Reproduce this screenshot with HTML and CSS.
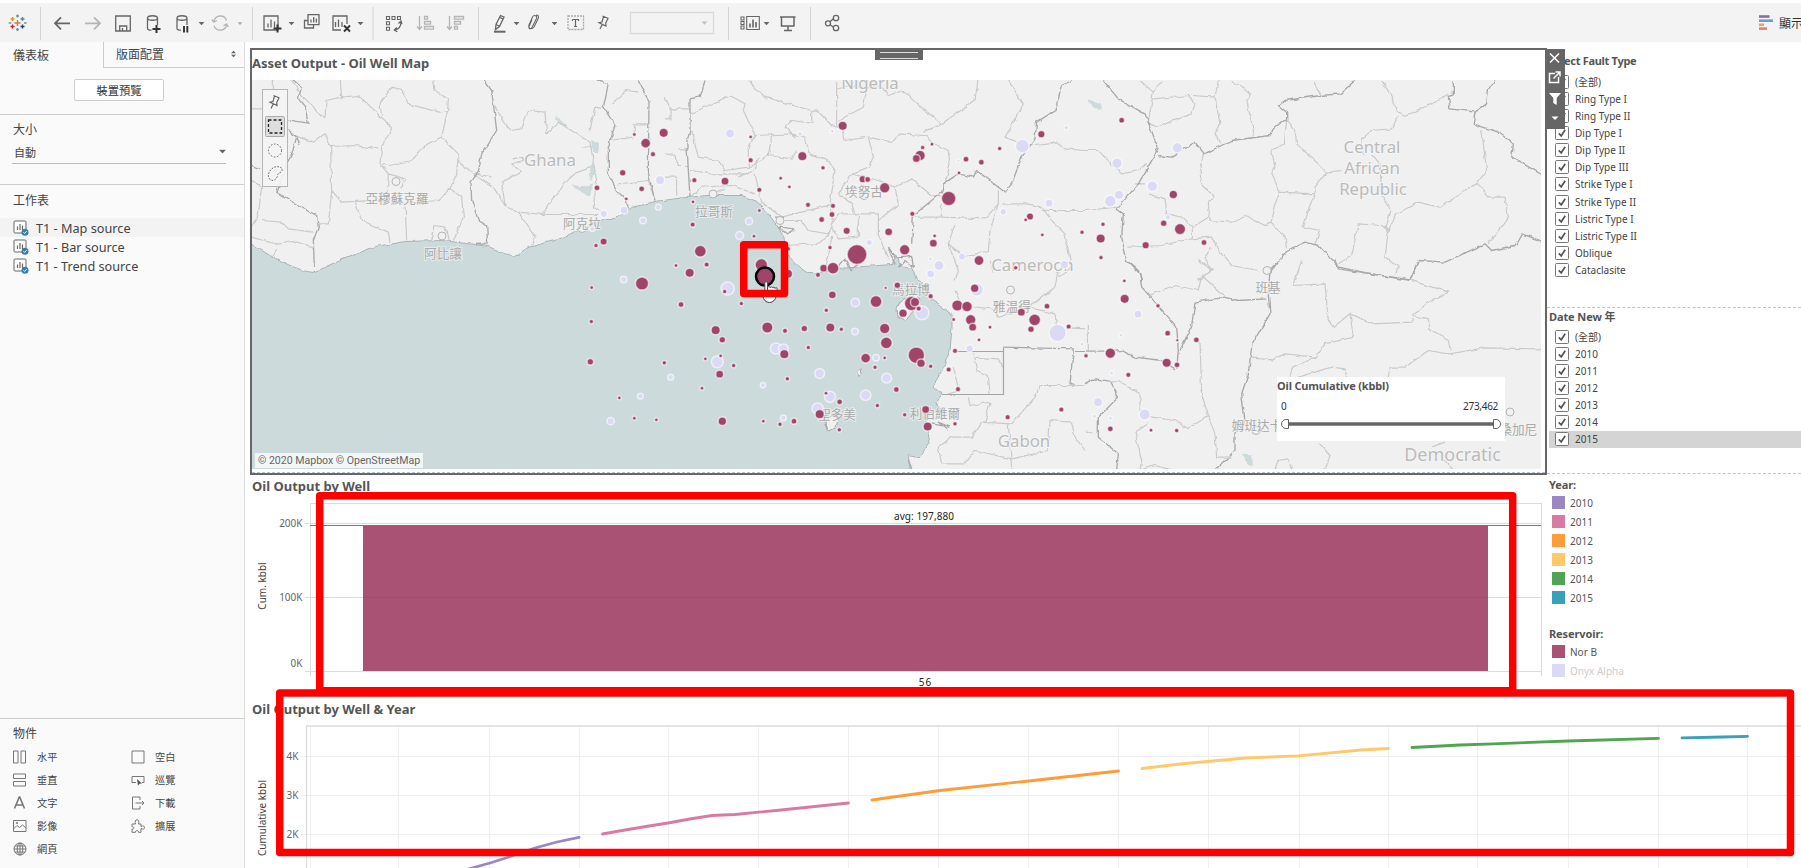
FILE: index.html
```html
<!DOCTYPE html>
<html lang="zh-Hant">
<head>
<meta charset="utf-8">
<title>Asset Output</title>
<link rel="stylesheet" href="styles.css">
</head>
<body>
<svg width="0" height="0" class="defs">
  <defs>
    <symbol id="sheet" viewBox="0 0 16 16"><rect x="1" y="1" width="12" height="12" rx="1" fill="#fff" stroke="#666"/><path d="M4.5 10V6.5M7 10V4M9.500 10V5.500" stroke="#666" stroke-width="1.200"/><circle cx="12" cy="12.300" r="3.500" fill="#3a7fa5"/><path d="M10.500 12.300l1.100 1.100 2-2.200" stroke="#fff" fill="none"/></symbol>
    <symbol id="check" viewBox="0 0 14 14"><rect x=".5" y=".5" width="13" height="13" rx="1" fill="#fff" stroke="#777"/><path d="M3.800 7.300l2.400 2.500 4-6" fill="none" stroke="#555" stroke-width="1.700"/></symbol>
    <symbol id="caret" viewBox="0 0 6 4"><path d="M0 .5h6L3 3.700z"/></symbol>
    <symbol id="pin" viewBox="0 0 14 16"><path d="M5.500 1.500l6 2.500M6.500 2L5 7.500 2 8.200l7 3.300-.3-2.900L11 3.900M5.200 10L3 14.500" fill="none" stroke="#666" stroke-width="1.200"/></symbol>
    <filter id="ragged" x="0" y="0" width="100%" height="100%"><feTurbulence type="fractalNoise" baseFrequency=".13" numOctaves="2" seed="4"/><feDisplacementMap in="SourceGraphic" scale="4" xChannelSelector="R" yChannelSelector="G"/></filter>
  </defs>
</svg>

<header class="toolbar">
  <svg class="tools" viewBox="0 3 900 39" width="900" height="39" fill="none" stroke="#666" stroke-width="1.300">
    <g stroke-width="1.400"><path d="M17.500 20v6M14.500 23h6" stroke="#e8762d"/><path d="M12.500 17v4M10.500 19h4" stroke="#eb912b"/><path d="M22.500 17v4M20.500 19h4" stroke="#5b879b"/><path d="M12.500 24.500v4M10.500 26.500h4" stroke="#c72037"/><path d="M22.500 24.500v4M20.500 26.500h4" stroke="#1f447e"/><path d="M17.500 14.500v3M16 16h3M8.700 23h2.600M24 23h2.600M17.500 28v3M16 29.500h3" stroke="#7099a6"/></g>
    <path d="M40.500 7v33M252.500 7v33M373 7v33M478.500 7v33M728.500 7v33M810.500 7v33" stroke="#d4d4d4" stroke-width="1"/>
    <path d="M70 23.300H55M61 17.300l-6 6 6 6" stroke-width="1.800"/>
    <path d="M85 23.300h15M94 17.300l6 6-6 6" stroke="#b5b5b5" stroke-width="1.800"/>
    <path d="M115.700 16h14.600v15h-14.600zM119.700 31v-5h7v5M122.500 31v-3"/>
    <path d="M147.500 18v10.500c0 1 1.500 1.700 4 1.700M157.500 18v7M147.500 18c0-3 10-3 10 0s-10 3-10 0"/>
    <path d="M156.500 25v8M152.500 29h8" stroke="#333" stroke-width="2"/>
    <path d="M177 18v10.500c0 1 1.500 1.700 4 1.700M187 18v7M177 18c0-3 10-3 10 0s-10 3-10 0"/>
    <path d="M184 26v6.500M187.300 26v6.500" stroke="#333" stroke-width="1.900"/>
    <path d="M214 21a6.500 6.500 0 0 1 12.500-.5M226.500 25a6.500 6.500 0 0 1-12.500.8M211.800 19.500l2 2.700 3-1.700M223.500 25.800l3.200-1.800 1.500 3" stroke="#b5b5b5"/>
    <path d="M264 16h14v14h-14zM268 27.500v-4M271 27.500v-8M274.500 27.500v-6"/>
    <path d="M277.500 24.500v8M273.500 28.500h8" stroke="#333" stroke-width="2"/>
    <path d="M308 14.700h11v10h-11zM311 22.500v-3M313.700 22.500V17M316.300 22.500v-4M308 20.500h-3.500v7.500h9v-3" />
    <path d="M347 16.500V16h-14v14h8M335.500 27v-5M338.500 27v-7.500M342 27v-5M347 16v8"/>
    <path d="M344 25.500l6 6M350 25.500l-6 6" stroke="#333" stroke-width="1.900"/>
    <g stroke-width="1.100"><path d="M386.500 16.500h3v3h-3zM392 16.500h3v3h-3zM397.500 16.500h3v3h-3zM386.500 21.800h3v3h-3zM386.500 27.300h3v3h-3z"/></g>
    <path d="M401 22c0 5-3 7.500-6.500 8M398.500 23.500l2.500-2.500 1 3M396.700 27.500l-2.400 2.500 3 1.800"/>
    <g stroke="#b5b5b5"><path d="M419.500 16v13M417 26.500l2.500 3 2.500-3M424.500 16.500h3v2.600h-3zM424.500 21.500h6v2.600h-6zM424.500 26.500h9v2.600h-9zM449.500 16v13M447 26.500l2.500 3 2.500-3M454.500 16.500h9v2.600h-9zM454.500 21.500h6v2.600h-6zM454.500 26.500h3v2.600h-3z"/></g>
    <path d="M500.500 15.500l3.500 1.500-4.500 9.500-4 3 .5-5zM500 17.500l2.800 1.300M496 24.500l3 1.500"/><path d="M494 31.700h11.500" stroke="#666" stroke-width="2"/>
    <path d="M532 19.500l-3 7c-.7 2.500 2 3 3 1l4.500-9c1.300-3-2.500-4-4-1.500l-3.500 8c-1 3 2 5.500 5 2l4-8c1.500-3.500-.5-4-2-4" stroke-width="1.100"/>
    <path d="M568 16h15.500v13.500H568z" stroke="#aaa" stroke-dasharray="2 1"/><path d="M572.500 19.500h6v1.500M572.500 21v-1.500M575.500 19.500v7M574 26.500h3" stroke-width="1.200"/>
    <path d="M630.500 12.500h83v21h-83z" stroke="#dadada"/>
    <path d="M741 17h3v3h-3zM741 21.500h3v3h-3zM741 26h3v3h-3zM746.700 16.500h12.600v13h-12.600z" stroke-width="1.100"/><path d="M750 27.500v-4M753 27.500v-8M756 27.500v-5.500" stroke-width="1.600"/>
    <path d="M780 17h15.500M781.500 17v9h12.500v-9M788 26.500v4M784 30.500h8" stroke-width="1.500"/>
    <path d="M828 23.300l5.500-4.500M828 23.300l5.500 4" /><circle cx="828" cy="23.300" r="2.500" fill="#f3f3f3"/><circle cx="836" cy="18" r="2.700"/><circle cx="836" cy="28" r="2.700"/>
    <g fill="#666" stroke="none"><use href="#caret" x="198.500" y="21.500" width="6" height="4"/><use href="#caret" x="237.500" y="21.500" width="5" height="4" opacity=".5"/><use href="#caret" x="288.500" y="21.500" width="6" height="4"/><use href="#caret" x="357.500" y="21.500" width="6" height="4"/><use href="#caret" x="513.500" y="21.500" width="6" height="4"/><use href="#caret" x="551.500" y="21.500" width="6" height="4"/><use href="#caret" x="701.500" y="21" width="6" height="4" opacity=".35"/><use href="#caret" x="763.500" y="21.500" width="6" height="4"/></g>
    <use href="#pin" x="597" y="14.500" width="14" height="16"/>
  </svg>
  <div class="showme"><svg width="14" height="16"><path d="M0 1.500h10.500" stroke="#8a6f9b" stroke-width="2.600"/><path d="M0 5.700h14" stroke="#6f9bd1" stroke-width="2.600"/><path d="M0 9.800h5" stroke="#f0a060" stroke-width="2.600"/><path d="M0 13.600h8" stroke="#ef7b74" stroke-width="2.600"/></svg><span>顯示</span></div>
</header>

<div class="workspace">
  <aside class="side">
    <div class="tabs"><div class="tab on">儀表板</div><div class="tab">版面配置<svg width="5" height="8" viewBox="0 0 6 8"><path d="M0 3h6L3 0zM0 5h6L3 8z" fill="#666"/></svg></div></div>
    <div class="preview"><button>裝置預覽</button></div>
    <section class="size"><h3>大小</h3><div class="select">自動<svg width="7" height="5" viewBox="0 0 6 4"><use href="#caret" width="6" height="4" fill="#666"/></svg></div></section>
    <section class="sheets"><h3>工作表</h3>
      <div class="sheet hot"><svg width="16" height="16"><use href="#sheet"/></svg>T1 - Map source</div>
      <div class="sheet"><svg width="16" height="16"><use href="#sheet"/></svg>T1 - Bar source</div>
      <div class="sheet"><svg width="16" height="16"><use href="#sheet"/></svg>T1 - Trend source</div>
    </section>
    <section class="objects"><h3>物件</h3>
      <div class="objgrid">
        <div><svg viewBox="0 0 14 14"><path d="M.5 1h4.500v12H.5zM8 1h4.500v12H8z"/></svg>水平</div>
        <div><svg viewBox="0 0 14 14"><path d="M1 1h12v12H1z"/></svg>空白</div>
        <div><svg viewBox="0 0 14 14"><path d="M.5 1h12v4.500H.5zM.5 8.500h12V13H.5z"/></svg>垂直</div>
        <div><svg viewBox="0 0 14 14"><path d="M5 9.500H1v-6h12v6h-2"/><path d="M6 6l5 4.500-2.500.3-1.500 2z" fill="#555" stroke="none"/></svg>巡覽</div>
        <div><svg viewBox="0 0 14 14"><path d="M1.500 12.500L6.300 1h.4l4.800 11.500M3.300 9h6.500" stroke-width="1.600"/></svg>文字</div>
        <div><svg viewBox="0 0 14 14"><path d="M9 4V1H1.500v12H9v-3M4.500 7H13M11 5l2 2-2 2"/></svg>下載</div>
        <div><svg viewBox="0 0 14 14"><path d="M.5 1.500h12.500v11H.5zM.5 10L4 6.500l2.500 2 3-2.500 3.500 3"/><circle cx="4" cy="4" r=".7"/></svg>影像</div>
        <div><svg viewBox="0 0 14 14"><path d="M1 5h3.500C3.500 2.500 4.500.7 6 .7S8.500 2.500 7.500 5H10v2.500c2-1 3.700-.5 3.700 1s-1.700 2-3.700 1v3.800H7.500c.3-2.500-3.300-2.500-3 0H1V10c2.500.5 2.500-2.500 0-2.300z"/></svg>擴展</div>
        <div><svg viewBox="0 0 14 14"><circle cx="7" cy="7" r="6"/><ellipse cx="7" cy="7" rx="2.800" ry="6"/><path d="M1 7h12M2 4h10M2 10h10M7 1v12"/></svg>網頁</div>
      </div>
    </section>
  </aside>

  <main class="dash">
    <div class="views">
      <section class="mapzone">
        <h2>Asset Output - Oil Well Map</h2>
        <svg class="map" viewBox="252 79.500 1289 389.500" width="1289" height="389.500">
          <rect x="252" y="79" width="1290" height="391" fill="#f0f0f0"/>
          <g filter="url(#ragged)">
            <rect x="240" y="70" width="1310" height="410" fill="none"/>
            <path class="sea" d="M245 240L252 244 270 255 290 265 303 270 312 272 325 267 345 258 375 246 395 243 405 241 442 240 475 244 488 246 503 252 513 257 528 247 558 239 578 230 593 222 607 218 615 218 632 207 655 201 685 197 708 195 742 195 757 201 768 213 777 225 784 237 785 247 790 257 798 265 808 273 818 273 838 268 865 266 892 264 895 257 888 248 898 257 900 266 912 268 917 280 928 287 932 300 943 307 952 313 952 327 950 350 942 370 932 387 942 392 937 402 940 410 925 413 927 427 930 443 920 457 907 455 912 475 245 475z"/>
            <path class="land" d="M897 309l3-7 8-4 7-6 5 8-8 12-6 8-8-4zM826 420l6-5 6 4-2 8-9 4zM858 371l3-3 1 5-3 3z"/>
            <path class="lake" d="M557 114l3 5 6 6-4-1-6-5zM591 139l8 5-1 8-5-1v-3l-13-1 12-2zM571 184l10 2 12-3-3 12-8-3zM593 160l2 12-4 8-2-6zM1088 99l13 4 1 6-5-1-9-6zM1242 453l10 1 1 12-8-6zM715 191l9-4 3 1-8 4z"/>
            <g transform="translate(245 40) scale(.33333)">
              <path class="rg" d="M20 205H52M85 150V120L105 105M140 120L170 165 240 235 243 180 290 170 285 110M290 170L340 165 375 200 420 240 440 265 410 320 405 370 430 400 425 490M410 225L405 190 440 140 470 150 490 190 580 215 608 210 610 175 570 150 565 110M608 210L590 290 640 340 635 400 615 445 580 480 490 488M590 290L545 310 500 360 430 375 412 370M400 325L330 315 257 318 240 280 205 305 150 285M257 318L260 450 250 550H222M260 450L290 485 425 478 480 490 485 600M330 485L350 540 430 575 435 605M560 600L570 555 600 560 610 598M430 400L480 415 470 440M615 445L650 470 655 530 625 600M20 420L50 440 40 520 20 560M50 540L110 545 130 565 205 575M20 590L90 610 140 600 205 620M80 655L95 625M640 360L690 405 745 440 780 495 820 515 895 522 910 490 985 400 1040 380M690 400L740 410M800 355L830 350 835 360 800 370 830 395 770 425 780 495M820 515L870 590 860 615M750 200L795 270 830 265 850 210 900 215 905 280 940 245 1035 305 1055 420 1045 500 1080 520M1035 270L1050 200 1080 205M895 522H1060M1100 190L1145 150 1180 155M1168 280V250H1210M1095 300L1165 290M1120 430L1210 420 1230 480"/>
              <path class="bd" d="M135 110L170 140 160 175 180 200 190 248 130 238M130 268L155 290 140 340 115 400 95 455 135 480 215 525 220 560 205 600 208 680M155 290L165 310M20 375L45 385M715 115L740 150 755 270 735 300 710 340 700 395 678 425 680 480 700 540 725 555 728 610 690 612M1055 120L1090 130 1075 200 1110 255 1090 320 1090 400 1115 450 1145 480 1150 505M1180 120L1190 145 1212 180 1210 400 1230 480"/>
            </g>
            <g transform="translate(665 70) scale(.33333)">
              <path class="rg" d="M0 80L15 110V145H0M15 115H75M0 250L30 255 40 285H70M40 235H72M0 320H35V375M78 130L130 105 195 75 240 100 235 120 270 195 380 190 420 200 435 250 495 275 510 300 495 400 505 440 490 500M250 30L300 80 440 120 455 118 500 165 515 170 515 30M440 120V158L380 150 360 170 395 205M515 60L560 45 605 55 595 110 520 150M605 55L650 50 670 75 715 60 750 95 830 160 930 90 940 20M535 180L540 210 610 200 680 215 700 190 780 195 800 215M830 160L775 185M610 200L625 260 610 290 560 310 535 345 520 370M800 215L850 240 855 280 840 340M1030 30L1075 100 1020 200 1085 225 1170 215 1200 235 1260 240M80 180L100 260 160 270 180 300 250 290 250 230 270 195M250 290L310 255 320 195M75 300L140 310 250 310M310 255L380 265 395 240M220 320L270 300 280 260M270 310L290 395 350 440 410 425 470 410 500 400M75 380L110 350 200 345 270 370M360 450L410 450 430 480 490 490 500 460 520 430 580 430 580 500 520 505 500 470M360 525L450 520 490 500M500 500L480 590M580 430L640 430 640 490 670 570M640 450L700 400 690 350 740 325 800 375 830 380M520 370L560 400 570 430M560 310L640 330 690 350M745 440L830 440 960 445 1000 400 1000 360M830 440V400M870 460L850 520 900 560 970 540 975 480 1000 400M1010 400L1090 400 1130 410 1160 450 1200 490 1220 590 1180 620M1130 420H1260M850 520L880 600 870 630"/>
              <path class="bd" d="M120 30L105 80 75 85 75 180 65 215 75 380M740 520L745 435 830 365 835 340 880 310 925 320 935 300 1020 365 1040 340 1070 260 1110 205 1115 155 1170 120 1190 45 1220 30M330 440L355 440 345 470 390 475 365 490 340 470M520 590L540 565 555 600 580 580M670 530L690 560 740 555 745 590 720 570 700 590M670 540L690 580"/>
            </g>
            <g transform="translate(1085 70) scale(.33333)">
              <path class="rg" d="M165 30L205 65 190 155 215 170 320 130 330 100 310 75 205 85M205 65L230 30M400 30L390 80 320 75M390 80L405 160 390 190 405 220M440 30L500 70 485 90 508 195M685 30L705 75M890 30L915 70 940 125 965 135 1060 90 1090 70M940 135L920 175 860 180 830 205 835 255M860 250L885 280 890 370 915 420 900 470 915 480M605 145L630 180 635 220 700 280 725 305 770 300M605 145L598 220 560 240 570 290 560 310 585 365 690 370 690 350 725 305M585 365L570 400 555 455 540 465 480 435 440 455 375 450 370 400 385 375 350 340 345 310 358 250M555 455L600 500 605 540M690 370L670 420 655 470 705 480 690 520M760 580L800 555 820 460 890 465 910 480 900 560 940 590 930 615M910 480L935 430 1000 395 1065 410 1175 340 1205 300 1190 180M1175 340L1215 380 1260 380 1270 440 1210 520M0 240L40 240 110 310 160 300 185 280M150 340H180M190 370L240 385 245 430 290 440 322 470 370 440M322 470V505L380 500 400 540 440 585 520 600M130 530L230 525 320 505 380 500M380 530L360 560 380 600 340 630M0 420L95 410"/>
              <path class="bd" d="M55 30L100 85 180 130 220 235 160 340 95 415 115 430 110 500 125 570 160 600 170 630M220 255L260 260 330 215 358 250 440 210 555 195 565 175 605 145 605 125 580 105 600 90 705 75 765 70 810 30M1105 30V70L1090 75 1095 115 1170 125 1205 100 1210 60 1230 30M1170 125L1165 160 1240 185 1285 220 1280 260 1370 312M555 610L605 540 660 515 700 525 760 590 860 610 975 630 1000 570 1080 575 1200 520 1220 540 1290 525 1310 490 1370 512"/>
            </g>
            <g transform="translate(665 250) scale(.33333)">
              <path class="bd" d="M480 520L488 540M850 430L870 437M800 520L855 530 820 515 850 540M727 615L740 655M1015 290L1225 295 1215 400 1230 405"/>
              <path class="rg" d="M975 30L985 65M1090 170L1170 110 1180 60M870 120L890 165 980 175 1000 200 1060 180 1090 170 1170 190 1175 230 1260 235M925 310L935 360 970 375 975 430M865 350L885 420 850 430M925 320L1000 325 1010 350M1260 405H1125L1110 440 1040 520 950 515 920 560 860 560 820 590 830 640 900 640 930 600 1040 625 1150 600 1155 510 1220 515 1230 560 1260 600M910 440L915 465 975 455 960 515M1030 520L1040 655"/>
            </g>
            <g transform="translate(1085 260) scale(.33333)">
              <path class="bd" d="M125 0L165 40 170 80 250 170 275 200 280 270 275 325M285 270L320 195 330 125 420 110 460 120 545 115M0 272H90L110 270 150 290 230 300 270 325M585 0L555 30 550 100 555 160 500 255 490 340 470 400 480 480 450 520 450 570 390 628M0 370L30 355 75 362 100 410 40 470 40 530 100 580 95 628M750 0L760 25 860 40 975 58 1000 0"/>
              <path class="rg" d="M190 105L270 75 340 90 350 45 400 90 420 105M350 45L385 30 340 0M650 0L625 75 720 70 730 180 745 200 795 160 860 190 980 185 985 160 1040 120 1090 95 1010 70 975 58M795 160L805 230 720 250 690 290 600 280 560 298 495 292M690 290L620 325 615 350M640 350L740 320 780 325 785 350M910 350L915 320 960 320 1030 270 1090 280 1200 262 1370 265M985 165L1030 175 1035 210 1090 240 1095 270M345 240L350 400 370 465 390 520 395 590 440 590M370 465L310 505 270 480 200 470 165 450 165 400 100 360 70 362M190 490L150 515 170 600 165 628M165 628L210 615 260 628M570 628L580 600 610 595 620 628M700 545L735 585 720 628M1040 560L1080 545M1070 590L1105 628M0 510L30 520M10 270V195"/>
            </g>
          </g>
          <path d="M952.500 351H1003.500V394H942M1003.500 394V347M1075 351h10" fill="none" stroke="#a5a5a5" stroke-width="1.200"/>
          <g class="dots" fill="#f0f0f0" stroke="#b5b5b5"><circle cx="396" cy="181" r="4"/><circle cx="442" cy="235.500" r="4"/><circle cx="582" cy="228" r="4"/><circle cx="713" cy="193.500" r="4"/><circle cx="780" cy="220" r="4"/><circle cx="864" cy="195" r="4"/><circle cx="1010.500" cy="289.500" r="4"/><circle cx="1267" cy="270" r="4"/><circle cx="1510" cy="411.500" r="4"/><circle cx="1256" cy="430" r="4"/></g>
          <g class="country"><text x="550" y="165">Ghana</text><text x="870" y="88">Nigeria</text><text x="1032.500" y="270">Cameroon</text><text x="1372" y="152.500">Central</text><text x="1372" y="173.500">African</text><text x="1373" y="194.500">Republic</text><text x="1024" y="446">Gabon</text><text class="big" x="1452.500" y="460.500">Democratic</text></g>
          <g class="city"><text x="397" y="202">亞穆蘇克羅</text><text x="443" y="257">阿比讓</text><text x="582" y="227">阿克拉</text><text x="714" y="215">拉哥斯</text><text x="864" y="195">埃努古</text><text x="911" y="293">馬拉博</text><text x="1012" y="310">雅温得</text><text x="1268" y="291">班基</text><text x="837" y="418">聖多美</text><text x="935" y="417">利伯維爾</text><text x="1257" y="429">姆班达卡</text><text x="1512" y="433">基桑加尼</text></g>
          <g id="wells"></g>
        </svg>
        <div class="grip"></div>
        <svg class="maptools" width="26" height="98" viewBox="262 89 26 98" fill="none" stroke="#666"><rect x="262.500" y="89.500" width="25" height="97" fill="#f4f4f4" fill-opacity=".9" stroke="#b5b5b5"/><use href="#pin" x="268" y="94" width="14" height="16"/><rect x="265.500" y="116.500" width="19" height="20" rx="1" fill="#dedede" stroke="#aaa"/><rect x="268.500" y="120" width="13" height="13" stroke="#222" stroke-width="1.300" stroke-dasharray="3 2"/><circle cx="275" cy="150.500" r="6.500" stroke-dasharray="1.600 1.600"/><path d="M270 179.500c-4-4 0-11 5-12.500 4-1 8 .5 7 3.500s-4 1.500-4.500 5-4.500 6.500-7.500 4z" stroke-dasharray="1.600 1.400"/></svg>
        <div class="range"><b>Oil Cumulative (kbbl)</b><div class="ends"><span>0</span><span>273,462</span></div><svg width="222" height="12"><path d="M6 6h210" stroke="#666" stroke-width="3.500"/><path d="M8.500 1.500H6a4.500 4.500 0 0 0 0 9h2.500zM213.500 1.500h2.500a4.500 4.500 0 0 1 0 9h-2.500z" fill="#fff" stroke="#666"/></svg></div>
        <div class="credit">© 2020 Mapbox © OpenStreetMap</div>
        <svg class="zonebar" width="20" height="80" fill="none" stroke="#fff"><rect width="20" height="80" fill="#666" stroke="none"/><path d="M5 4.500l9 9M14 4.500l-9 9" stroke-width="1.500"/><path d="M10 24.500H4.500v9h9V28M8.500 29.500l6-6M10.500 23h4.500v4.500" stroke-width="1.500"/><path d="M4 44h12l-4.300 5v7l-3.400-2v-5z" fill="#fff" stroke="none"/><path d="M6.500 67.500h7L10 71z" fill="#fff" stroke="none"/></svg>
      </section>
      <section class="barzone">
        <h2>Oil Output by Well</h2>
        <svg viewBox="250 496 1297 201" width="1297" height="201">
          <path d="M310.500 503.500H1541.500M310.500 523.500H1541.500M305 523.500h5M305 597.500H1541.500M305 671.500H1541.500M310.500 503v173M1541.500 503v173" stroke="#dcdcdc" fill="none"/>
          <rect x="363" y="525.500" width="1125" height="145.500" fill="#aa5273"/><path d="M363 597.500H1488" stroke="#a54b6c"/>
          <path d="M310 525.500H1541" stroke="#777"/>
          <g class="ax" text-anchor="end"><text x="302.500" y="527">200K</text><text x="302.500" y="601">100K</text><text x="302.500" y="667">0K</text></g>
          <text class="ay" transform="rotate(-90 266 586)" x="266" y="586">Cum. kbbl</text>
          <g class="mk"><text x="924" y="519.800" textLength="60">avg: 197,880</text><text x="925" y="685.500" textLength="12.500">56</text></g>
        </svg>
      </section>
      <section class="linezone">
        <h2>Oil Output by Well &amp; Year</h2>
        <svg viewBox="250 719 1551 149" width="1551" height="149">
          <path d="M310.500 726v142M398.500 726v142M489.500 726v142M579.500 726v142M668.500 726v142M758.500 726v142M848.500 726v142M938.500 726v142M1028.500 726v142M1118.500 726v142M1208.500 726v142M1299.500 726v142M1388.500 726v142M1477.500 726v142M1568.500 726v142M1658.500 726v142M1747.500 726v142M301 756.500H1801M301 795.500H1801M301 834.500H1801" stroke="#efefef"/>
          <path d="M306.500 868V726H1801" stroke="#dcdcdc" fill="none" stroke-width="1.300"/>
          <g fill="none" stroke-width="2.800" stroke-linecap="round" stroke-linejoin="round">
            <path d="M465 870L490 863 512 856 535 848 557 842 579 837.300" stroke="#9b87c2"/>
            <path d="M602.500 834L625 830 646 826.500 668 823 690 819 712 815.500 735 814.500 781 810 848.500 803" stroke="#d87ba4"/>
            <path d="M872 800L940 790.500 1029 781 1118.500 771" stroke="#fd9c3a"/>
            <path d="M1142 768.500L1180 764 1246 758 1298 755.800 1361 750 1388.500 748.500" stroke="#ffc96b"/>
            <path d="M1412 747.500L1460 745 1493 743.800 1568 741 1658.500 738.300" stroke="#4fa553"/>
            <path d="M1682 737.800L1723 737 1747.500 736.300" stroke="#3a9fbb"/>
          </g>
          <g class="ax" text-anchor="end"><text x="298.500" y="760">4K</text><text x="298.500" y="799">3K</text><text x="298.500" y="838">2K</text></g>
          <text class="ay" transform="rotate(-90 266 818)" x="266" y="818">Cumulative kbbl</text>
        </svg>
      </section>
    </div>

    <div class="filters">
      <section class="fault"><h4 class="ft">Select Fault Type</h4><ul id="fault"></ul></section>
      <section class="date"><h4>Date New 年</h4><ul id="date"></ul></section>
      <section class="legend"><h4>Year:</h4>
        <div><i class="y10"></i>2010</div><div><i class="y11"></i>2011</div><div><i class="y12"></i>2012</div><div><i class="y13"></i>2013</div><div><i class="y14"></i>2014</div><div><i class="y15"></i>2015</div>
        <h4 class="res">Reservoir:</h4>
        <div><i class="nor"></i>Nor B</div><div class="dim"><i class="onyx"></i>Onyx Alpha</div>
      </section>
    </div>
  </main>
</div>

<svg class="notes" width="1801" height="868" fill="none">
  <path d="M767.500 290.500v-7.500c0-1.800-2.700-1.800-2.700 0v9l-1.500-1.500 3 5h9.500l1.200-3.500v-3.500c0-1.200-1.800-1.200-2 0 0-1.600-2.200-1.600-2.400-.4 0-1.600-2.200-1.600-2.400-.4 0-1.400-2.500-1.400-2.700-.2z" fill="#fff" stroke="#444" stroke-width=".9"/>
  <path d="M763 296a6.500 6.500 0 0 0 13 0z" fill="#fff" stroke="#444"/>
  <g stroke="#f00" stroke-width="7.500" stroke-linejoin="round"><rect x="743.700" y="244.700" width="40.800" height="48.800"/><rect x="319.700" y="495.700" width="1193" height="195"/><rect x="279.700" y="693" width="1510.800" height="159.500"/></g>
</svg>
<script src="app.js"></script>
</body>
</html>
```
FILE: styles.css
```css
* { box-sizing: border-box; }
body { margin: 0; width: 1801px; height: 868px; overflow: hidden; position: relative; background: #fff; color: #555; font: 11px "Noto Sans", "Noto Sans CJK TC", sans-serif; display: flex; flex-direction: column; }
svg { display: block; flex: none; }
.defs { position: absolute; }
h2, h3, h4, ul { margin: 0; padding: 0; list-style: none; }
.toolbar { flex: none; height: 39px; margin-top: 3px; background: #f3f3f3; display: flex; justify-content: space-between; overflow: hidden; }
.showme { display: flex; align-items: center; gap: 6px; width: 42px; white-space: nowrap; font-size: 12px; color: #333; }
.workspace { display: flex; flex: 1; min-height: 0; }

.side { width: 245px; flex: none; background: #fafafa; border-right: 1px solid #ddd; display: flex; flex-direction: column; color: #444; }
.side h3 { font-size: 12px; font-weight: 400; line-height: 18px; padding-left: 13px; }
.tabs { display: flex; height: 26px; font-size: 12px; line-height: 27px; }
.tab { flex: 1; padding-left: 12px; border-left: 1px solid #ccc; border-bottom: 1px solid #ccc; display: flex; justify-content: space-between; align-items: center; padding-right: 8px; }
.tab svg { margin-top: -2px; }
.tab.on { flex: 0 0 103px; border: 0; padding-left: 13px; padding-top: 1px; }
.preview { height: 47px; border-bottom: 1px solid #ccc; display: flex; justify-content: center; padding: 11px 6px 0 0; }
.preview button { width: 90px; height: 22px; border: 1px solid #ccc; border-radius: 2px; background: #fff; font: 11.300px "Noto Sans CJK TC", sans-serif; color: #333; padding: 0; line-height: 18px; }
.size { height: 70px; border-bottom: 1px solid #ccc; padding-top: 6px; }
.select { margin: 2px 18px 0 12px; height: 23px; border-bottom: 1px solid #bbb; font-size: 11px; display: flex; align-items: center; justify-content: space-between; padding: 0 0 1px 2px; }
.sheets { padding-top: 7px; flex: 1; }
.sheets h3 { margin-bottom: 8px; }
.sheet { height: 19px; display: flex; align-items: center; gap: 7px; padding-left: 13px; font-size: 12.700px; }
.sheet.hot { background: #f3f3f3; }
.objects { height: 150px; border-top: 1px solid #ccc; padding-top: 6px; }
.objgrid { display: grid; grid-template-columns: 118px 1fr; grid-auto-rows: 23px; padding: 2px 0 0 13px; font-size: 10.200px; }
.objgrid div { display: flex; align-items: center; gap: 10px; }
.objgrid svg { width: 14px; height: 14px; fill: none; stroke: #777; }

.dash { flex: 1; display: flex; padding: 6px 0 0 5px; min-width: 0; }
.views { width: 1297px; flex: none; }
h2 { font-size: 13px; font-weight: 700; line-height: 18px; color: #555; white-space: nowrap; letter-spacing: 0; }
.mapzone { height: 427px; border: 2px solid #666; position: relative; }
.mapzone::after { content: ""; position: absolute; left: 0; right: 0; bottom: 0; border-bottom: 1px dashed #b9c5d6; }
.mapzone h2 { height: 29.500px; padding-top: 4px; }
.grip { position: absolute; left: 623px; top: 0; width: 48px; height: 10px; background: #666; }
.grip::after { content: ""; position: absolute; left: 5px; right: 5px; top: 2px; height: 5px; border: 1px solid #ddd; border-width: 1px 0; }
.maptools { position: absolute; left: 10px; top: 39px; }
.zonebar { position: absolute; right: -20px; top: -1px; z-index: 2; }
.credit { position: absolute; left: 3px; bottom: 5px; width: 168px; height: 15px; line-height: 16px; background: rgba(255,255,255,.75); padding-left: 3px; color: #666; font-family: Roboto, sans-serif; font-size: 10.600px; white-space: nowrap; letter-spacing: -.02px; }
.range { position: absolute; left: 1025px; top: 327px; width: 228px; height: 64px; background: #fff; font-size: 10px; }
.range b { display: block; font-size: 11px; line-height: 17px; letter-spacing: -.17px; }
.ends { display: flex; justify-content: space-between; padding: 4px 7px 0 4px; line-height: 16px; color: #333; letter-spacing: -.3px; }
.range svg { margin: 4px 0 0 3px; }
.sea { fill: #cddadb; stroke: #a9b3b3; }
.land { fill: #f0f0f0; stroke: #aaa; }
.lake { fill: #cddadb; }
.rg { fill: none; stroke: #cacaca; stroke-width: 3.600; stroke-linejoin: round; }
.bd { fill: none; stroke: #a8a8a8; stroke-width: 4; stroke-linejoin: round; }
.country, .city { text-anchor: middle; paint-order: stroke; stroke: #f4f4f4; stroke-width: 2px; }
.country { font-size: 16.800px; fill: #bbb; }
.big { font-size: 18px; }
.city { font: 12.600px "Noto Sans CJK TC", sans-serif; fill: #aaa; stroke-opacity: .7; }
.nb { fill: #a0456a; stroke: #fff; stroke-opacity: .6; }
.ox { fill: #dadaf5; stroke: #fff; stroke-opacity: .6; }
.sel { fill: #a0456a; stroke: #000; stroke-width: 2.500px; }

.barzone { height: 221px; padding: 2px 0 0 2px; }
.barzone h2 { height: 19px; }
.barzone svg, .linezone svg { margin-left: -2px; }
.linezone { padding: 4px 0 0 2px; }
.linezone h2 { height: 19px; }
.ax { font-size: 10px; fill: #666; }
.ay { font-size: 10px; fill: #444; text-anchor: middle; }
.mk { font-size: 10px; fill: #222; text-anchor: middle; }

.filters { flex: 1; min-width: 0; height: 630px; }
h4 { font-size: 11px; line-height: 16px; padding-left: 2px; color: #555; letter-spacing: -.1px; }
.ft { letter-spacing: -.3px; }
.fault { height: 260px; border-bottom: 1px dashed #b9c5d6; padding-top: 5px; }
.fault ul { padding-top: 4px; }
.date { height: 166px; border-bottom: 1px dashed #b9c5d6; padding-top: 1px; }
.date ul { padding-top: 3px; }
li { height: 17.150px; display: flex; align-items: center; gap: 6px; margin-left: 2px; padding-left: 6px; font-size: 10px; color: #444; }
li.hot { background: #d4d4d4; }
.legend { padding-top: 3px; }
.legend div { height: 19px; display: flex; align-items: center; gap: 5px; padding-left: 5px; font-size: 10px; }
.legend h4 { margin-bottom: 0; }
.legend .res { margin: 19px 0 0; }
.legend i { width: 13px; height: 13px; }
.dim { color: #ccc; }
.y10 { background: #9b87c2; } .y11 { background: #d87ba4; } .y12 { background: #fd9c3a; } .y13 { background: #ffc96b; } .y14 { background: #4fa553; } .y15 { background: #3a9fbb; }
.nor { background: #aa5273; } .onyx { background: #dadaf5; }
.notes { position: absolute; left: 0; top: 0; z-index: 3; pointer-events: none; }
```
FILE: app.js
```js
// Wells by map tile: origin, then "x,y,r" triples in third-of-a-pixel units.
const tiles = [
  { ox: 245, oy: 40,
    onyx: "1245,419,12 1076,520,9 1137,509,10 1240,500,7 1194,540,8 1042,565,6",
    nor: "1168,282,4 1202,308,13 1256,277,12 1224,341,6 1133,397,8 1056,442,7 1190,445,7 1144,475,4 1076,603,9 1053,615,5" },
  { ox: 665, oy: 70,
    onyx: "195,189,12 405,190,5 502,182,4 1072,227,19 1204,171,5 1152,398,10 1015,424,8 252,452,9 224,495,10 613,516,7 891,558,9 822,585,13 797,610,10 796,565,4 1198,582,11 880,271,3",
    nor: "257,199,4 257,269,6 412,257,12 474,292,5 533,166,12 88,329,6 180,332,10 283,358,6 347,323,4 373,349,4 429,403,6 504,406,6 470,447,7 501,432,7 545,481,9 593,326,9 608,327,7 659,352,14 765,255,14 754,264,10 773,231,5 801,221,4 742,430,6 671,484,10 809,496,4 805,518,10 719,538,14 851,384,20 903,266,7 949,275,7 882,307,4 1004,234,5 1129,191,9 1095,438,9 1082,448,4 1132,493,4 1251,485,5 84,394,4 283,420,4 83,462,6 267,497,4 106,542,16 125,582,6 33,585,4 74,607,12 495,531,5 476,593,10 504,593,16 459,613,6 576,552,28 942,570,13 1052,592,5 369,610,12 289,583,17 370,535,5" },
  { ox: 1085, oy: 70,
    onyx: "277,232,14 96,278,14 202,347,14 76,392,16 102,373,12 249,440,6",
    nor: "110,149,7 54,461,5 47,504,12 48,561,5 265,372,11 236,458,8 285,476,15 182,524,9 357,516,7" },
  { ox: 245, oy: 260,
    onyx: "1136,57,8 1186,407,7 1097,482,9",
    nor: "1040,81,4 1191,69,18 1039,183,5 1036,304,8 1123,412,4 1168,473,4 1234,478,4 1258,307,5" },
  { ox: 665, oy: 250,
    onyx: "188,114,18 571,156,11 570,243,8 333,294,15 355,295,13 157,334,16 17,380,7 464,369,13 294,404,6 633,322,8 665,383,13 495,439,15 602,434,14 458,474,15 355,502,7 771,187,19 935,117,18 914,294,9 1178,247,24 1251,281,4",
    nor: "48,162,7 179,123,5 229,159,5 502,133,10 484,179,5 152,239,12 172,268,8 307,231,15 360,241,6 418,234,8 496,231,12 529,236,5 659,234,14 664,277,16 430,291,5 358,311,12 633,153,16 662,112,3 697,104,8 740,159,20 750,155,12 761,174,6 714,188,11 797,137,6 754,314,23 768,338,11 797,347,5 602,323,13 659,322,4 630,350,5 121,325,4 167,316,4 206,345,5 164,371,10 111,413,4 367,385,5 483,428,4 524,454,7 637,465,5 694,417,7 464,491,12 172,512,11 295,512,4 345,521,5 387,512,7 523,538,5 719,493,5 782,477,10 788,528,12 870,520,5 877,165,15 906,168,14 929,113,11 917,208,14 923,230,10 866,207,4 975,230,4 942,268,4 870,301,6 851,357,6 879,416,6 1069,185,10 1109,208,16 1098,236,8 1146,167,7 1211,228,6 1189,477,6 1028,500,6" },
  { ox: 1085, oy: 260,
    onyx: "159,161,10 108,224,4 80,338,4 39,425,12 179,462,15 28,467,4 76,473,4",
    nor: "118,61,4 119,115,12 219,136,5 248,218,7 277,239,3 334,238,7 76,278,14 3,286,5 245,307,12 276,313,7 130,343,6 76,505,7 198,509,4 275,510,5" }
];
const dot = (t, cls) => s => {
  const [x, y, r] = s.split(",").map(Number);
  return `<circle class="${cls}" cx="${t.ox + x / 3}" cy="${t.oy + y / 3}" r="${r / 3 + 0.6}" stroke-width="1.5"/>`;
};
document.getElementById("wells").innerHTML =
  tiles.map(t => t.onyx.split(" ").map(dot(t, "ox")).join("")).join("") +
  tiles.map(t => t.nor.split(" ").map(dot(t, "nb")).join("")).join("") +
  '<circle class="sel" cx="765" cy="276" r="9"/>';

const box = '<svg width="14" height="14"><use href="#check"/></svg>';
const list = (id, items) => {
  document.getElementById(id).innerHTML = items.map(t => `<li${t === "2015" ? ' class="hot"' : ""}>${box}${t}</li>`).join("");
};
list("fault", ["(全部)", "Ring Type I", "Ring Type II", "Dip Type I", "Dip Type II", "Dip Type III", "Strike Type I", "Strike Type II", "Listric Type I", "Listric Type II", "Oblique", "Cataclasite"]);
list("date", ["(全部)", "2010", "2011", "2012", "2013", "2014", "2015"]);
```
